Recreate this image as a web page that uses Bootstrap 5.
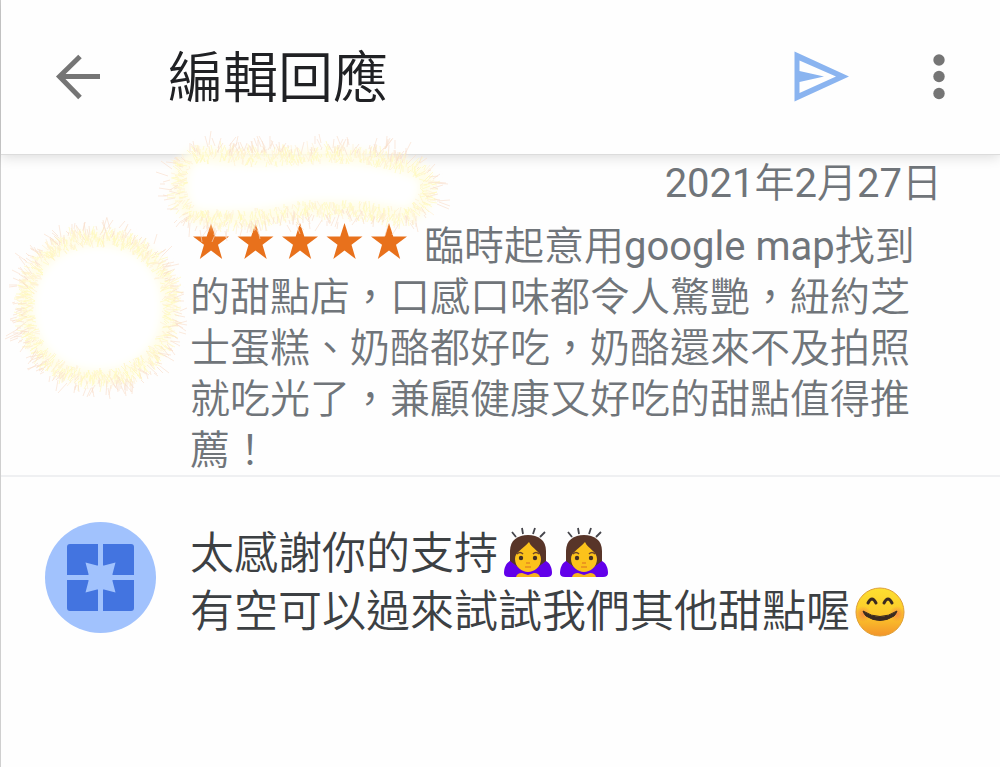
<!DOCTYPE html>
<html lang="zh-Hant">
<head>
<meta charset="utf-8">
<meta name="viewport" content="width=device-width, initial-scale=1">
<title>編輯回應</title>
<link href="https://cdn.jsdelivr.net/npm/bootstrap@5.3.0/dist/css/bootstrap.min.css" rel="stylesheet">
<style>
  body { font-family: Roboto, "Noto Sans CJK TC DemiLight", "Noto Sans CJK TC", sans-serif; background: #fefefe; color: #3c4043; }
  .app-shell { border-left: 1px solid #cfcfcf; }
  .app-bar { height: 155px; padding: 0 36px 0 48px; background: #fefefe; border-bottom: 1px solid #dcdcdc; box-shadow: 0 2px 12px rgba(0,0,0,.14); }
  .app-title { font-size: 55px; line-height: 72px; font-weight: 350; color: #202124; margin-left: 47px; padding-top: 2px; }
  .icon-btn { line-height: 0; }
  .side-col { width: 189px; }
  .review { color: #70757a; font-size: 40px; line-height: 51px; font-weight: 400; border-bottom: 2px solid #eff0f2; }
  .date-row { height: 66px; padding-right: 58px; }
  .date-row time { line-height: 58px; }
  .review-text { padding-right: 80px; margin-bottom: -1px; }
  .stars { vertical-align: 0; }
  .reply { padding-top: 48px; }
  .reply-mark { margin-left: 44px; margin-top: -3px; }
  .reply-text { font-size: 44px; line-height: 58px; font-weight: 350; outline: 0; }
  .emoji { vertical-align: -12px; margin-left: 1px; margin-right: -1px; }
  .glow { overflow: visible; position: relative; z-index: 2; pointer-events: none; }
</style>
</head>
<body>
<div class="app-shell min-vh-100">
  <header class="app-bar d-flex align-items-center position-relative">
    <button class="btn p-0 border-0 icon-btn" type="button" aria-label="返回">
      <svg width="72" height="60" viewBox="0 0 72 60" fill="none" stroke="#757575" stroke-width="5"><path d="M51 29.500H10M31 9.500 10.500 29.500l20.500 21"/></svg>
    </button>
    <h1 class="app-title mb-0">編輯回應</h1>
    <button class="btn p-0 border-0 icon-btn ms-auto" type="button" aria-label="傳送">
      <svg width="60" height="60" viewBox="0 0 60 60"><path fill="#8ab4f0" fill-rule="evenodd" d="M.500 4.500 55 29.500.500 54.500zM5.500 13.500V24L30 29.500 5.500 35V46L42 29.500z"/></svg>
    </button>
    <button class="btn p-0 border-0 icon-btn ms-5" type="button" aria-label="更多選項">
      <svg width="62" height="60" viewBox="0 0 62 60" fill="#757575"><circle cx="37" cy="13" r="5.700"/><circle cx="37" cy="29.500" r="5.700"/><circle cx="37" cy="46.500" r="5.700"/></svg>
    </button>
  </header>

  <main>
    <section class="review d-flex">
      <div class="side-col flex-shrink-0 pt-5">
        <svg class="glow d-block" width="189" height="220" viewBox="0 0 189 220" data-spark="circle" aria-hidden="true"></svg>
      </div>
      <div class="flex-grow-1">
        <div class="date-row d-flex justify-content-between">
          <svg class="glow" width="240" height="66" viewBox="0 0 240 66" data-spark="bar" aria-hidden="true"></svg>
          <time datetime="2021-02-27">2021年2月27日</time>
        </div>
        <p class="review-text"><svg class="stars" width="234" height="38" viewBox="0 0 234 38" role="img" aria-label="5 顆星"><defs><path id="star" fill="#e8711c" d="M18 1 22.300 14.500H36L25 22.800 29.200 37 18 28.500 6.800 37 11 22.800 0 14.500H13.700z"/></defs><use href="#star" x="3"/><use href="#star" x="47.500"/><use href="#star" x="92"/><use href="#star" x="136.500"/><use href="#star" x="181"/></svg>臨時起意用google map找到的甜點店，口感口味都令人驚艷，紐約芝士蛋糕、奶酪都好吃，奶酪還來不及拍照就吃光了，兼顧健康又好吃的甜點值得推薦！</p>
      </div>
    </section>

    <section class="reply d-flex">
      <div class="side-col flex-shrink-0">
        <svg class="d-block reply-mark" width="111" height="111" viewBox="0 0 111 111" role="img" aria-label="商家">
          <circle cx="55.500" cy="55.500" r="55.500" fill="#a1c2fd"/>
          <rect x="22" y="22" width="67" height="67" rx="3" fill="#4374e0"/>
          <path d="M55.500 22V89M22 55.500H89" stroke="#a1c2fd" stroke-width="5"/>
          <path fill="#a1c2fd" d="M40.500 40.500 52 43.500H59L70.500 40.500 67.500 52V59L70.500 70.500 59 67.500H52L40.500 70.500 43.500 59V52z"/>
        </svg>
      </div>
      <div class="reply-text flex-grow-1" role="textbox" aria-multiline="true" aria-label="回應" contenteditable="true" spellcheck="false">太感謝你的支持<svg class="emoji" width="56" height="54" viewBox="0 0 56 54" role="img" aria-label="鞠躬"><use href="#bow"/></svg><svg class="emoji" width="56" height="54" viewBox="0 0 56 54" role="img" aria-label="鞠躬"><use href="#bow"/></svg><br>有空可以過來試試我們其他甜點喔<svg class="emoji" width="56" height="54" viewBox="0 0 56 54" role="img" aria-label="微笑"><use href="#smile"/></svg></div>
    </section>
  </main>
</div>

<svg class="position-absolute" width="0" height="0" aria-hidden="true">
  <defs>
    <linearGradient id="face" x2="0" y2="1"><stop offset="0" stop-color="#fde030"/><stop offset=".55" stop-color="#fcc92a"/><stop offset="1" stop-color="#f3942a"/></linearGradient>
    <radialGradient id="blush"><stop offset="0" stop-color="#f5704c" stop-opacity=".7"/><stop offset="1" stop-color="#f5704c" stop-opacity="0"/></radialGradient>
    <filter id="soft" x="-30%" y="-30%" width="160%" height="160%"><feGaussianBlur stdDeviation="4"/></filter>
    <g id="bow">
      <path d="M13 5l4 5M23 1l1 6M36 1l-2 6M46 5l-5 5" stroke="#45454b" stroke-width="1.800" fill="none"/>
      <path fill="#583529" d="M11 42V24C11 13 19 8 29 8s18 5 18 16v18z"/>
      <path fill="#6200ea" d="M11 34C7 36 5 41 5 46q0 4 5 4h38q5 0 5-4c0-5-2-10-6-12l-8 6q-10 6-20 0z"/>
      <path fill="#fcc21b" d="M16 32c0-7 7-9 14-17 3 7 12 9 12 17 0 8-7 13-13 13S16 40 16 32z"/>
      <path fill="#f8b51c" d="M17 50q1-4 6-4l6 2 6-2q5 0 6 4z"/>
      <path d="M18 27q3-3 6 0M34 27q3-3 6 0" fill="none" stroke="#6d4329" stroke-width="1.500"/>
      <circle cx="22" cy="31" r="2.200" fill="#443025"/><circle cx="36" cy="31" r="2.200" fill="#443025"/>
      <path d="M27 36h4M26 40h6" stroke="#e58a20" stroke-width="1.500"/>
    </g>
    <g id="smile">
      <circle cx="29" cy="27" r="24" fill="url(#face)" stroke="#dfa039"/>
      <circle cx="12" cy="29" r="8" fill="url(#blush)"/><circle cx="46" cy="29" r="8" fill="url(#blush)"/>
      <path d="M17 18q4-8 8 0M33 18q4-8 8 0" fill="none" stroke="#3a2a20" stroke-width="3" stroke-linecap="round"/>
      <path d="M12 26q17 11 34 0-1 3-3 5-14 9-28 0-2-2-3-5z" fill="#3a2a20" stroke="#3a2a20" stroke-linejoin="round"/>
    </g>
  </defs>
</svg>

<script src="https://cdn.jsdelivr.net/npm/bootstrap@5.3.0/dist/js/bootstrap.bundle.min.js"></script>
<script>
  // Sparkler outlines hiding the reviewer's photo and name
  let seed = 7;
  const rnd = () => (seed = (seed * 16807) % 2147483647) / 2147483647;
  const shapes = {
    circle: { d: 'M97 36C140 36 168 64 168 104S140 174 97 174 26 144 26 104 54 36 97 36z', n: 1100 },
    bar: { d: 'M14 0Q60 6 120 2T228 16Q240 24 236 36 232 60 212 60 160 50 110 54 60 66 10 62-10 58-10 30-10 0 14 0z', n: 1100 }
  };
  document.querySelectorAll('[data-spark]').forEach(svg => {
    const s = shapes[svg.dataset.spark];
    svg.innerHTML = `<path d="${s.d}" fill="#fff" stroke="#fffde8" stroke-width="14" filter="url(#soft)"/><path d="${s.d}" fill="none"/>`;
    const edge = svg.lastElementChild, len = edge.getTotalLength();
    const paths = { '#fff9bc': '', '#fff0d4': '', '#f9dfcc': '' };
    for (let i = 0; i < s.n; i++) {
      const t = rnd() * len, p = edge.getPointAtLength(t), q = edge.getPointAtLength((t + 1) % len);
      const a = Math.atan2(q.y - p.y, q.x - p.x) - Math.PI / 2 + (rnd() - .5) * 1.2;
      const far = i % 5 === 0, d = far ? rnd() * 15 : rnd() * 16 - 9, l = 3 + rnd() * (far ? 11 : 7);
      const c = far ? '#f9dfcc' : i % 3 ? '#fff9bc' : '#fff0d4';
      const cx = Math.cos(a), cy = Math.sin(a);
      paths[c] += `M${Math.round(p.x + cx * d)} ${Math.round(p.y + cy * d)}l${Math.round(cx * l)} ${Math.round(cy * l)}`;
    }
    edge.remove();
    for (const c in paths) svg.insertAdjacentHTML('beforeend', `<path d="${paths[c]}" stroke="${c}" stroke-width="1" fill="none" opacity=".65"/>`);
  });
</script>
</body>
</html>
